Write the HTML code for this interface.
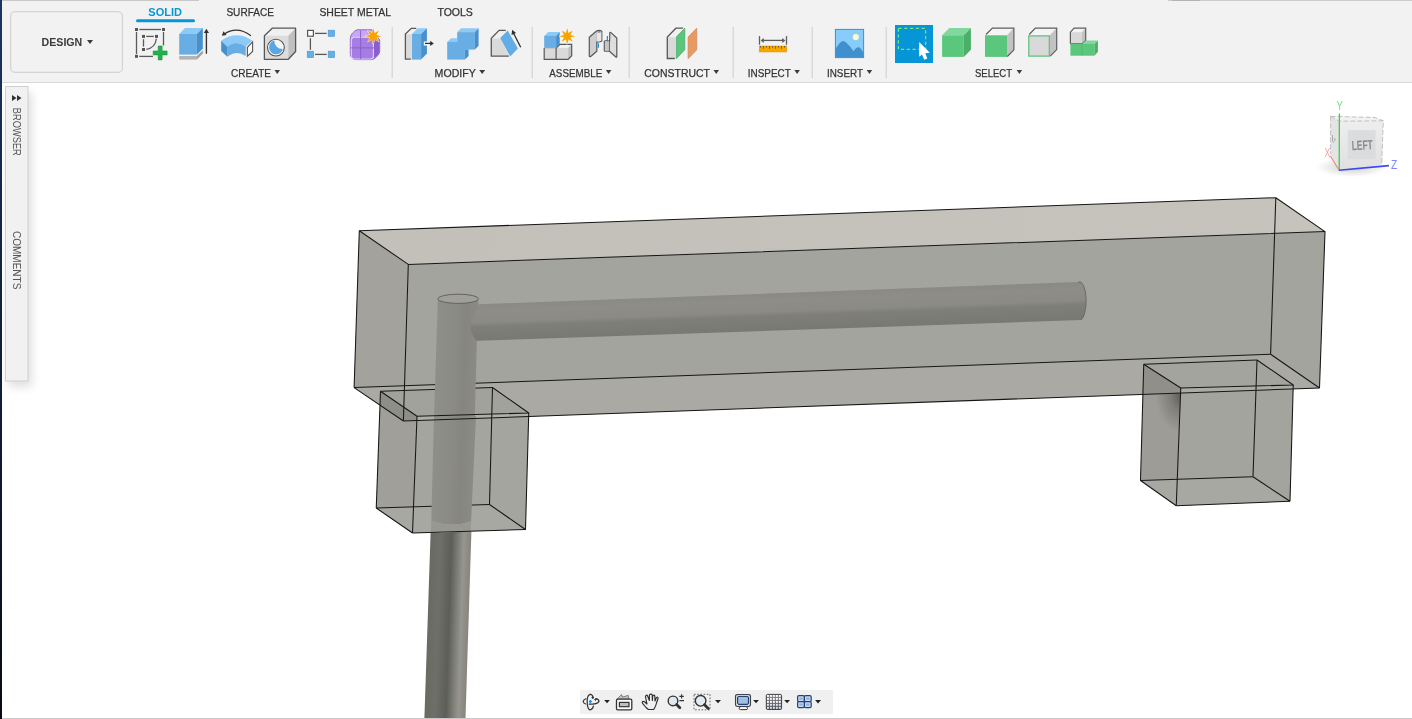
<!DOCTYPE html>
<html><head><meta charset="utf-8">
<style>
html,body{margin:0;padding:0;width:1412px;height:719px;overflow:hidden;background:#fff;font-family:"Liberation Sans",sans-serif;}
svg{position:absolute;left:0;top:0;will-change:transform;}
</style></head>
<body>
<svg width="1412" height="719" viewBox="0 0 1412 719" font-family="Liberation Sans, sans-serif">
<defs>
  <linearGradient id="strip" x1="0" y1="0" x2="0" y2="1">
    <stop offset="0" stop-color="#1c3362"/><stop offset="0.6" stop-color="#0f1b36"/><stop offset="1" stop-color="#070a12"/>
  </linearGradient>
  <filter id="panelShadow" x="-100%" y="-20%" width="300%" height="140%">
    <feGaussianBlur stdDeviation="5"/>
  </filter>
</defs>
<!-- toolbar -->
<rect x="0" y="0" width="1412" height="82" fill="#f2f2f2"/>
<rect x="0" y="82" width="1412" height="1" fill="#d9d9d9"/>
<rect x="2" y="0" width="197" height="1" fill="#c8c8c8"/>
<rect x="1168" y="0" width="244" height="1" fill="#cccccc"/>
<rect x="1172" y="0" width="28" height="1" fill="#b4b4b4"/>

<!-- design button -->
<rect x="10.6" y="11.6" width="111.8" height="60.8" rx="4.5" fill="#f2f2f2" stroke="#d4d4d4" stroke-width="1.3"/>
<text x="41.6" y="46" font-size="11" font-weight="bold" fill="#3a3a3a" textLength="40.7" lengthAdjust="spacingAndGlyphs">DESIGN</text>
<path d="M87 40 L93 40 L90 44 Z" fill="#3a3a3a"/>

<!-- tabs -->
<text x="148.3" y="16" font-size="11" font-weight="bold" fill="#0696d7" textLength="33.7" lengthAdjust="spacingAndGlyphs">SOLID</text>
<rect x="136" y="19.2" width="59" height="3" rx="1.5" fill="#0696d7"/>
<text x="226.4" y="16" font-size="11" fill="#333" stroke="#333" stroke-width="0.25" textLength="47.6" lengthAdjust="spacingAndGlyphs">SURFACE</text>
<text x="319.4" y="16" font-size="11" fill="#333" stroke="#333" stroke-width="0.25" textLength="71.6" lengthAdjust="spacingAndGlyphs">SHEET METAL</text>
<text x="437.4" y="16" font-size="11" fill="#333" stroke="#333" stroke-width="0.25" textLength="35.5" lengthAdjust="spacingAndGlyphs">TOOLS</text>

<!-- group labels -->
<g font-size="11" fill="#333" stroke="#333" stroke-width="0.25">
<text x="231" y="77" textLength="40" lengthAdjust="spacingAndGlyphs">CREATE</text>
<text x="434.6" y="77" textLength="41.2" lengthAdjust="spacingAndGlyphs">MODIFY</text>
<text x="549.3" y="77" textLength="52.9" lengthAdjust="spacingAndGlyphs">ASSEMBLE</text>
<text x="644.3" y="77" textLength="65.7" lengthAdjust="spacingAndGlyphs">CONSTRUCT</text>
<text x="747.8" y="77" textLength="43" lengthAdjust="spacingAndGlyphs">INSPECT</text>
<text x="827" y="77" textLength="36" lengthAdjust="spacingAndGlyphs">INSERT</text>
<text x="975" y="77" textLength="37" lengthAdjust="spacingAndGlyphs">SELECT</text>
</g>
<g fill="#3c3c3c">
<path d="M274.5 70 h5.5 l-2.75 4 z"/>
<path d="M479.2 70 h6 l-3 4 z"/>
<path d="M605.9 70 h5.5 l-2.75 4 z"/>
<path d="M713.5 70 h5.5 l-2.75 4 z"/>
<path d="M794.4 70 h5.5 l-2.75 4 z"/>
<path d="M866.7 70 h5.5 l-2.75 4 z"/>
<path d="M1016.6 70 h5.5 l-2.75 4 z"/>
</g>
<!-- separators -->
<g fill="#d9d9d9">
<rect x="391.5" y="27" width="1.5" height="51"/>
<rect x="531.5" y="27" width="1.5" height="51"/>
<rect x="628.5" y="27" width="1.5" height="51"/>
<rect x="732.5" y="27" width="1.5" height="51"/>
<rect x="811.5" y="27" width="1.5" height="51"/>
<rect x="885.5" y="27" width="1.5" height="51"/>
</g>


<g id="icons">
<!-- Sketch -->
<g>
 <g stroke="#5a5a5a" stroke-width="1.3" fill="none">
  <line x1="139.3" y1="29.5" x2="161" y2="29.5"/>
  <line x1="136.5" y1="32" x2="136.5" y2="54"/>
  <line x1="163.5" y1="32" x2="163.5" y2="45.5"/>
  <line x1="139.3" y1="56.4" x2="153" y2="56.4"/>
  <line x1="146.2" y1="36.4" x2="153.8" y2="36.4"/>
  <line x1="143.5" y1="39.2" x2="143.5" y2="46.6"/>
  <path d="M156.3,38.8 Q155.5,47.8 146.3,49.4"/>
 </g>
 <g fill="#555">
  <rect x="135" y="28" width="3" height="3"/><rect x="162" y="28" width="3" height="3"/><rect x="135" y="54.8" width="3" height="3"/>
  <rect x="142" y="34.9" width="3" height="3"/><rect x="155" y="34.9" width="3" height="3"/><rect x="142" y="48" width="3" height="3"/>
 </g>
 <path d="M158.2,46 h3.9 v5 h5 v3.9 h-5 v5 h-3.9 v-5 h-5 v-3.9 h5 z" fill="#22b04c" stroke="#17953b" stroke-width="0.6"/>
</g>
<!-- Extrude -->
<g>
 <polygon points="179.2,56 196.9,56 196.9,59.6 179.2,59.6" fill="#b3b3b3"/>
 <polygon points="196.9,56 202.8,50.3 202.8,53.6 196.9,59.6" fill="#a0a0a0"/>
 <polygon points="179.2,34 185,28 202.8,28 196.9,34" fill="#8ccaf8"/>
 <polygon points="179.2,34 196.9,34 196.9,54.6 179.2,54.6" fill="#68ade4"/>
 <polygon points="196.9,34 202.8,28 202.8,48.6 196.9,54.6" fill="#4690cd"/>
 <line x1="206.4" y1="32" x2="206.4" y2="53.7" stroke="#333" stroke-width="1.4"/>
 <polygon points="206.4,28.8 209,33 203.8,33" fill="#333"/>
</g>
<!-- Revolve -->
<g>
 <path d="M250.9,35.7 Q237,25.5 224,34.2" stroke="#333" stroke-width="1.2" fill="none"/>
 <polygon points="221.8,35.8 223.5,31.2 226.6,35" fill="#333"/>
 <path d="M221.2,40.7 Q236.4,30 252.3,40.7 L245.9,46.5 Q236.4,39.5 227,46.5 Z" fill="#8ccaf8"/>
 <path d="M227,46.5 Q236.4,39.5 245.9,46.5 L245.6,55.9 Q236.4,49.5 227.3,56.8 Z" fill="#68ade4"/>
 <polygon points="221.2,40.7 227,46.5 227.3,56.8 221.2,51" fill="#4690cd"/>
 <polygon points="247.4,47.3 252.6,41.8 252.6,51.5 247.4,56.2" fill="#fff" stroke="#555" stroke-width="1.1"/>
</g>
<!-- Hole -->
<g>
 <polygon points="264.4,35.7 272.2,28.2 295.6,28.2 288.3,35.7" fill="#f0f0f0"/>
 <polygon points="264.4,35.7 288.3,35.7 288.3,59.3 264.4,59.3" fill="#dcdcdc"/>
 <polygon points="288.3,35.7 295.6,28.2 295.6,51.5 288.3,59.3" fill="#c0c0c0"/>
 <path d="M264.4,59.3 V35.7 L272.2,28.2 H295.6 V51.5 L288.3,59.3 Z" fill="none" stroke="#575757" stroke-width="1.3" stroke-linejoin="round"/>
 <circle cx="275.9" cy="47.6" r="8.4" fill="#f4f4f4" stroke="#555" stroke-width="1.1"/>
 <path d="M274.3,40.6 A7,7 0 1 0 282.9,48.9 A8,8 0 0 1 274.3,40.6 Z" fill="#5aa6e2"/>
</g>
<!-- Pattern -->
<g>
 <g stroke="#5a5a5a" stroke-width="1.3">
  <line x1="315" y1="33.4" x2="326.7" y2="33.4"/>
  <line x1="310.4" y1="38.2" x2="310.4" y2="49.8"/>
  <line x1="315" y1="54.4" x2="326.7" y2="54.4"/>
 </g>
 <rect x="307.6" y="30.4" width="5.8" height="5.8" fill="#fff" stroke="#555" stroke-width="1.2"/>
 <rect x="328.2" y="30.2" width="6.4" height="6.2" fill="#63afe7" stroke="#4a93cf" stroke-width="0.6"/>
 <rect x="307.2" y="51.2" width="6.4" height="6.4" fill="#63afe7" stroke="#4a93cf" stroke-width="0.6"/>
 <rect x="328.2" y="51.2" width="6.4" height="6.4" fill="#63afe7" stroke="#4a93cf" stroke-width="0.6"/>
</g>
<!-- Form -->
<g>
 <path d="M357.5,29.8 H372 L379.7,40 V51 Q379.7,53.5 377.8,55.5 L375.2,58 Q373.6,59.6 370.5,59.6 H356.5 Q350.3,59.6 350.3,53.5 V38.5 Q350.3,35.2 352.6,33 L354.6,31.2 Q356,29.8 357.5,29.8 Z" fill="#c9a7f7" stroke="#9466d4" stroke-width="1"/>
 <path d="M373.6,37.5 L379.2,40.5 V51 Q379.2,53.3 377.5,55.2 L374.2,58.4 Z" fill="#8b5dce"/>
 <rect x="351.4" y="37.2" width="22" height="21.8" rx="3.2" fill="#a67de2" stroke="#e0cffb" stroke-width="1.1"/>
 <line x1="360.6" y1="30.5" x2="360.6" y2="59" stroke="#8760c6" stroke-width="0.9"/>
 <line x1="350.8" y1="47.9" x2="379" y2="47.9" stroke="#8760c6" stroke-width="0.9"/>
 <polygon points="373.3,28 374.6,33 378.9,30.6 376.5,34.9 381.5,36.2 376.5,37.5 378.9,41.8 374.6,39.4 373.3,44.4 372,39.4 367.7,41.8 370.1,37.5 365.1,36.2 370.1,34.9 367.7,30.6 372,33" fill="#f5a400" stroke="#fff" stroke-width="0.7" paint-order="stroke"/>
</g>
<!-- Press pull -->
<g>
 <polygon points="405.8,34.3 411.4,28.8 416,28.8 411.5,34.3 411.5,59 405.8,59" fill="#f0f0f0"/>
 <rect x="406" y="34.3" width="5.5" height="24.8" fill="#dadada"/>
 <path d="M410.8,59.2 H405.4 V34.1 L411.3,28.3 H416.3" fill="none" stroke="#575757" stroke-width="1.3"/>
 <polygon points="411.9,34 417.8,28.2 426.9,28.2 421.1,34" fill="#8ccaf8"/>
 <rect x="411.9" y="34" width="9.2" height="25.6" fill="#68ade4"/>
 <polygon points="421.1,34 426.9,28.2 426.9,53.4 421.1,59.6" fill="#4690cd"/>
 <rect x="423.8" y="41.5" width="5" height="4" fill="#fff"/>
 <line x1="425" y1="43.4" x2="431" y2="43.4" stroke="#2e2e2e" stroke-width="1.3"/>
 <polygon points="433.8,43.4 430.2,40.8 430.2,46" fill="#2e2e2e"/>
</g>
<!-- Combine -->
<g>
 <polygon points="457.2,32.1 461.1,28.2 478.6,28.2 474.9,32.1" fill="#8ccaf8"/>
 <rect x="457.2" y="32.1" width="17.7" height="17.5" fill="#68ade4"/>
 <polygon points="474.9,32.1 478.6,28.2 478.6,45.7 474.9,49.6" fill="#4690cd"/>
 <polygon points="447.2,42 451.1,38.2 457.2,38.2 457.2,42" fill="#8ccaf8"/>
 <rect x="447.2" y="42" width="17.7" height="17.6" fill="#68ade4"/>
 <polygon points="464.9,49.6 468.6,49.6 468.6,55.9 464.9,59.6" fill="#4690cd"/>
</g>
<!-- Draft -->
<g>
 <polygon points="491.8,38.4 499.2,31 505.8,31 500.4,38.4" fill="#f0f0f0"/>
 <polygon points="491.8,38.4 500.4,38.4 509,56 491.8,56" fill="#dadada"/>
 <path d="M508.8,56.2 H491.3 V38.2 L499.1,30.4 H505.7" fill="none" stroke="#575757" stroke-width="1.3"/>
 <polygon points="500.2,37.9 507.7,30.4 517.9,48.4 510.2,56.5" fill="#62ade6"/>
 <line x1="520.7" y1="47.3" x2="513.4" y2="33" stroke="#2e2e2e" stroke-width="1.3"/>
 <polygon points="512.2,29.8 511.5,35 516,33" fill="#2e2e2e"/>
</g>
<!-- New component -->
<g>
 <rect x="544.2" y="47.9" width="11.9" height="11.4" fill="#dadada"/>
 <polygon points="556.4,47.9 560,44.3 571.7,44.3 568.1,47.9" fill="#f2f2f2"/>
 <rect x="556.4" y="47.9" width="11.7" height="11.4" fill="#dadada"/>
 <polygon points="568.1,47.9 571.7,44.3 571.7,55.7 568.1,59.3" fill="#c2c2c2"/>
 <path d="M544.2,47.9 V59.3 H568.1 L571.7,55.7 V44.3 H560 L556.4,47.9 M556.1,47.9 V59.3" fill="none" stroke="#575757" stroke-width="1.2"/>
 <line x1="544.2" y1="47.9" x2="556.4" y2="47.9" stroke="#888" stroke-width="0.6"/>
 <polygon points="544.2,35.9 548.1,32.1 559.7,32.1 556.1,35.9" fill="#8ccaf8"/>
 <rect x="544.2" y="35.9" width="11.9" height="12" fill="#68ade4"/>
 <polygon points="556.1,35.9 559.7,32.1 559.7,44 556.1,47.9" fill="#4690cd"/>
 <polygon points="567.2,28 568.5,33 572.8,30.6 570.4,34.9 575.4,36.2 570.4,37.5 572.8,41.8 568.5,39.4 567.2,44.4 565.9,39.4 561.6,41.8 564,37.5 559,36.2 564,34.9 561.6,30.6 565.9,33" fill="#f5a400" stroke="#fff" stroke-width="0.6" paint-order="stroke"/>
</g>
<!-- Joint -->
<g stroke="#585858" stroke-width="1.2" stroke-linejoin="round">
 <path d="M589.3,56 V37.3 L596.2,31.3 Q599,29.6 601.8,31.3 V41 Q599.3,42.6 596.8,41.6 V51.2 L590.7,56.5 Q589.3,57 589.3,56 Z" fill="#cfcfcf"/>
 <path d="M596.6,31.8 Q599,30.6 601.3,31.8 V40.6 Q599.2,41.8 596.9,41.2 Z" fill="#e8e8e8" stroke="none"/>
 <line x1="596.5" y1="32" x2="596.6" y2="41.5" stroke="#b5b5b5" stroke-width="0.6"/>
 <ellipse cx="599" cy="31.9" rx="2" ry="0.8" fill="#8a8a8a" stroke="none"/>
 <path d="M609.8,32.8 Q610.2,31.9 611,32.6 L616.8,38 V56.5 Q616.8,57.6 615.9,57 L609.4,51.2 H605 Q604.3,51.2 604.3,50.5 V41.3 Q606.8,39.7 609.6,41.3 Z" fill="#dedede"/>
 <path d="M604.9,41.6 Q606.8,40.6 609,41.6 V50.7 H604.9 Z" fill="#c6c6c6" stroke="none"/>
 <line x1="609.5" y1="41.3" x2="609.4" y2="51" stroke="#585858" stroke-width="0.9"/>
</g>
<line x1="598.4" y1="43.2" x2="598.4" y2="47.8" stroke="#1e90e0" stroke-width="1.2"/>
<line x1="607.4" y1="35.9" x2="607.4" y2="41.5" stroke="#1e90e0" stroke-width="1.2"/>
<!-- Construct -->
<g>
 <polygon points="667.8,37.3 675.9,28.7 683,28.7 675.5,37.3" fill="#f0f0f0"/>
 <rect x="668" y="37.3" width="7" height="21" fill="#dadada"/>
 <path d="M674.8,58.5 H667.3 V37.1 L675.9,28.2 H683.1" fill="none" stroke="#575757" stroke-width="1.3"/>
 <polygon points="676.2,37.1 684.8,28.2 684.8,49.8 676.2,58.7" fill="#5cc57d" stroke="#43ab63" stroke-width="0.7"/>
 <polygon points="688.1,37.1 696.7,28.2 696.7,49.8 688.1,58.7" fill="#e69b64" stroke="#d3844f" stroke-width="0.7"/>
</g>
<!-- Inspect -->
<g>
 <g stroke="#5e5e5e" stroke-width="1.3">
  <line x1="759.5" y1="36.1" x2="759.5" y2="44.7"/>
  <line x1="786.5" y1="36.1" x2="786.5" y2="44.7"/>
  <line x1="762" y1="40.4" x2="784" y2="40.4"/>
 </g>
 <polygon points="760.6,40.4 763.8,37.9 763.8,42.9" fill="#5e5e5e"/>
 <polygon points="785.4,40.4 782.2,37.9 782.2,42.9" fill="#5e5e5e"/>
 <rect x="759.2" y="46" width="27.6" height="6" fill="#f7a800" stroke="#e29300" stroke-width="0.5"/>
 <g stroke="#5e5e5e" stroke-width="1">
  <line x1="760.5" y1="46" x2="760.5" y2="47.6"/><line x1="763.4" y1="46" x2="763.4" y2="48.8"/>
  <line x1="766.4" y1="46" x2="766.4" y2="47.6"/><line x1="769.5" y1="46" x2="769.5" y2="48.8"/>
  <line x1="772.4" y1="46" x2="772.4" y2="47.6"/><line x1="775.4" y1="46" x2="775.4" y2="48.8"/>
  <line x1="778.4" y1="46" x2="778.4" y2="47.6"/><line x1="781.5" y1="46" x2="781.5" y2="48.8"/>
  <line x1="784.5" y1="46" x2="784.5" y2="47.6"/>
 </g>
</g>
<!-- Insert -->
<g>
 <rect x="835.4" y="29.4" width="28.2" height="28.2" fill="#88ccfb" stroke="#3b90d1" stroke-width="1"/>
 <path d="M835.9,48.5 Q840,41 843.3,40.9 Q846.5,41 853.6,51.2 Q856,47.3 858.3,47.3 Q860.5,47.3 863.1,52 V57.1 H835.9 Z" fill="#3f90cd"/>
 <circle cx="855.8" cy="37.1" r="3.1" fill="#fdfbc2"/>
</g>
<!-- Select -->
<g>
 <rect x="895" y="25" width="38" height="38" fill="#0696d7"/>
 <rect x="898.4" y="28.4" width="27.2" height="20.9" fill="none" stroke="#7be27c" stroke-width="1.3" stroke-dasharray="3.2,2.6"/>
 <polygon points="919.2,42 919.2,56.7 921.9,54.4 924.3,59.8 927.3,58.6 925.3,53.3 929.8,52.8" fill="#fff"/>
</g>
<!-- Select cubes -->
<g>
 <polygon points="942.1,35.3 949.3,28.1 970.9,28.1 963.8,35.3" fill="#80d89c"/>
 <rect x="942.1" y="35.3" width="21.7" height="21.6" fill="#5bc77d"/>
 <polygon points="963.8,35.3 970.9,28.1 970.9,49.8 963.8,56.9" fill="#48b068"/>
</g>
<g>
 <polygon points="985,35.3 992.4,28.1 1013.9,28.1 1007,35.3" fill="#f4f4f4"/>
 <polygon points="1007,35.3 1013.9,28.1 1013.9,49.8 1007,56.9" fill="#c2c2c2"/>
 <path d="M986,34.5 L992.4,28.1 H1013.9 V49.8 L1007.3,56.5" fill="none" stroke="#5e5e5e" stroke-width="1.2"/>
 <rect x="985" y="35.3" width="22" height="21.6" fill="#5bc77d"/>
</g>
<g>
 <polygon points="1028.2,35.3 1035.3,28.1 1056.7,28.1 1049.8,35.3" fill="#f4f4f4"/>
 <polygon points="1049.8,35.3 1056.7,28.1 1056.7,49.6 1049.8,56.6" fill="#c2c2c2"/>
 <path d="M1029.2,34.5 L1035.3,28.1 H1056.7 V49.6 L1050.2,56.2" fill="none" stroke="#5e5e5e" stroke-width="1.2"/>
 <rect x="1028.8" y="35.9" width="20.5" height="20.2" fill="#d9d9d9" stroke="#5bbf7a" stroke-width="1.2"/>
</g>
<g>
 <polygon points="1070.4,32.2 1074.1,28.1 1085.7,28.1 1082,32.2" fill="#f4f4f4"/>
 <rect x="1070.4" y="32.2" width="11.6" height="11.3" fill="#d9d9d9"/>
 <polygon points="1082,32.2 1085.7,28.1 1085.7,40.4 1082,43.5" fill="#c2c2c2"/>
 <path d="M1070.4,43.5 V32.2 L1074.1,28.1 H1085.7 V40.4 L1082,43.9 H1070.4" fill="none" stroke="#5e5e5e" stroke-width="1.2"/>
 <rect x="1070.4" y="44" width="11.6" height="11.7" fill="#5bc77d"/>
 <polygon points="1082,44 1085.7,40.4 1097.9,40.4 1094.5,44" fill="#80d89c"/>
 <rect x="1082" y="44" width="12.5" height="11.7" fill="#5bc77d"/>
 <line x1="1082" y1="44" x2="1082" y2="55.7" stroke="#4fb570" stroke-width="0.7"/>
 <polygon points="1094.5,44 1097.9,40.4 1097.9,51.8 1094.5,55.7" fill="#48b068"/>
</g>
</g>

<!-- END ICONS -->
<!-- 3D MODEL -->
<g id="model">
<defs>
 <linearGradient id="vpipeOut" gradientUnits="userSpaceOnUse" x1="447.9" y1="0" x2="488.7" y2="0" gradientTransform="skewX(-1.86)">
  <stop offset="0" stop-color="#6a6a62"/><stop offset="0.25" stop-color="#6e6f68"/><stop offset="0.52" stop-color="#5e5e59"/>
  <stop offset="0.7" stop-color="#80807a"/><stop offset="0.82" stop-color="#96968f"/><stop offset="1" stop-color="#87847b"/>
 </linearGradient>
 <linearGradient id="hpipe" gradientUnits="userSpaceOnUse" x1="0" y1="321.5" x2="0" y2="358.3" gradientTransform="skewY(-2.1)">
  <stop offset="0" stop-color="#8a8983"/><stop offset="0.2" stop-color="#8e8d87"/><stop offset="0.5" stop-color="#8b8a84"/><stop offset="0.62" stop-color="#7f7f79"/><stop offset="1" stop-color="#797974"/>
 </linearGradient>
 <linearGradient id="vpipeIn" gradientUnits="userSpaceOnUse" x1="447.5" y1="0" x2="488.5" y2="0" gradientTransform="skewX(-1.86)">
  <stop offset="0" stop-color="#8f8f89"/><stop offset="0.45" stop-color="#8b8b85"/><stop offset="0.7" stop-color="#86867f"/><stop offset="1" stop-color="#8b8b85"/>
 </linearGradient>
 <linearGradient id="topface" gradientUnits="userSpaceOnUse" x1="400" y1="200" x2="1300" y2="260">
  <stop offset="0" stop-color="#c3c0b9"/><stop offset="1" stop-color="#c6c3bc"/>
 </linearGradient>
 <radialGradient id="shadowR" cx="0.5" cy="0.5" r="0.5">
  <stop offset="0" stop-color="#3a3a36" stop-opacity="0.6"/><stop offset="0.4" stop-color="#3a3a36" stop-opacity="0.3"/><stop offset="1" stop-color="#3a3a36" stop-opacity="0"/>
 </radialGradient>
</defs>
<polygon points="359.30,230.80 1275.80,197.70 1325.00,231.60 408.30,264.40" fill="url(#topface)"/>
<polygon points="359.30,230.80 408.30,264.40 403.40,421.00 354.10,387.60" fill="#a3a29d"/>
<polygon points="408.30,264.40 1325.00,231.60 1319.50,388.00 403.40,421.00" fill="#a3a49e"/>
<polygon points="354.10,387.60 1270.60,354.20 1319.50,388.00 403.40,421.00" fill="#aaa9a3"/>
<polygon points="380.50,391.25 417.00,416.25 412.50,533.00 376.25,508.00" fill="#a09f9a"/>
<polygon points="417.00,416.25 528.75,413.00 525.50,529.50 412.50,533.00" fill="#a4a59f"/>
<polygon points="376.25,508.00 489.50,504.50 525.50,529.50 412.50,533.00" fill="#a8a8a2"/>
<polygon points="380.50,391.25 492.50,387.50 528.75,413.00 417.00,416.25" fill="#a2a29c"/>
<polygon points="380.50,391.25 417.00,416.25 416.85,420.51 403.40,421.00 380.00,405.50" fill="#8e8e89"/>
<polygon points="417.00,416.25 528.75,413.00 528.75,416.48 417.00,420.51" fill="#afafa9"/>
<polygon points="1143.75,364.25 1180.75,388.00 1176.25,505.75 1140.50,480.50" fill="#9d9c97"/>
<polygon points="1180.75,388.00 1293.25,385.00 1290.00,501.25 1176.25,505.75" fill="#a3a49e"/>
<polygon points="1140.50,480.50 1253.00,476.75 1290.00,501.25 1176.25,505.75" fill="#a8a8a2"/>
<polygon points="1143.75,364.25 1257.00,360.00 1293.25,385.00 1180.75,388.00" fill="#a4a49e"/>
<polygon points="1143.75,364.25 1180.75,388.00 1180.55,393.00 1142.75,394.33" fill="#908f8a"/>
<polygon points="1180.75,388.00 1293.25,385.00 1293.25,388.95 1180.75,393.00" fill="#acaca6"/>
<clipPath id="rlf"><polygon points="1142.75,394.33 1180.75,393.00 1176.25,505.75 1140.50,480.50"/></clipPath>
<ellipse cx="1180" cy="396" rx="24" ry="36" fill="url(#shadowR)" clip-path="url(#rlf)"/>
<g stroke="#161616" stroke-width="1.05" fill="none" stroke-linejoin="round">
<line x1="359.3" y1="230.8" x2="1275.8" y2="197.7"/>
<line x1="359.3" y1="230.8" x2="354.1" y2="387.6"/>
<line x1="1275.8" y1="197.7" x2="1270.6" y2="354.2"/>
<line x1="354.1" y1="387.6" x2="1270.6" y2="354.2"/>
<line x1="380.5" y1="391.25" x2="492.5" y2="387.5"/>
<line x1="376.25" y1="508" x2="489.5" y2="504.5"/>
<line x1="492.5" y1="387.5" x2="489.5" y2="504.5"/>
<line x1="1143.75" y1="364.25" x2="1257" y2="360"/>
<line x1="1140.5" y1="480.5" x2="1253" y2="476.75"/>
<line x1="1257" y1="360" x2="1253" y2="476.75"/>
</g>
<path d="M437.8,299 L478.5,300 L476.9,341 L474.7,421 L433.9,421 Z" fill="url(#vpipeIn)"/>
<path d="M434,416 L476,416 L471.1,521.4 Q451.2,527.8 431.3,520.7 Z" fill="url(#vpipeIn)"/>
<path d="M431.3,520.7 Q451.2,527.8 471.1,521.4 L470.9,531 L430.8,532.3 Z" fill="#989892"/>
<path d="M479,304.2 L1078.5,282 A6.5,19.2 0 0 1 1080.7,320.1 L477,340.8 C474,338 471,333 470.5,328 C470,322 476,312 479,304.2 Z" fill="url(#hpipe)"/>
<path d="M1078.5,282 A6.5,19.2 0 0 1 1080.7,320.1" fill="none" stroke="#66665f" stroke-width="0.9"/>
<path d="M430.6,533 L471.4,531.5 L465.5,718 L424.4,718 Z" fill="url(#vpipeOut)"/>
<ellipse cx="458.2" cy="298.8" rx="20.4" ry="4.6" fill="#a09f98" stroke="#5e5e58" stroke-width="0.9"/>
<g stroke="#161616" stroke-width="1.05" fill="none" stroke-linejoin="round">
<polyline points="359.30,230.80 408.30,264.40 1325.00,231.60 1275.80,197.70"/>
<line x1="408.3" y1="264.4" x2="403.4" y2="421"/>
<line x1="1325" y1="231.6" x2="1319.5" y2="388"/>
<line x1="403.4" y1="421" x2="1319.5" y2="388"/>
<line x1="354.1" y1="387.6" x2="403.4" y2="421"/>
<line x1="1270.6" y1="354.2" x2="1319.5" y2="388"/>
<polyline points="380.50,391.25 417.00,416.25 528.75,413.00 492.50,387.50"/>
<line x1="417" y1="416.25" x2="412.5" y2="533"/>
<line x1="528.75" y1="413" x2="525.5" y2="529.5"/>
<line x1="380.5" y1="391.25" x2="376.25" y2="508"/>
<line x1="412.5" y1="533" x2="525.5" y2="529.5"/>
<line x1="376.25" y1="508" x2="412.5" y2="533"/>
<line x1="489.5" y1="504.5" x2="525.5" y2="529.5"/>
<polyline points="1143.75,364.25 1180.75,388.00 1293.25,385.00 1257.00,360.00"/>
<line x1="1180.75" y1="388" x2="1176.25" y2="505.75"/>
<line x1="1293.25" y1="385" x2="1290" y2="501.25"/>
<line x1="1143.75" y1="364.25" x2="1140.5" y2="480.5"/>
<line x1="1176.25" y1="505.75" x2="1290" y2="501.25"/>
<line x1="1140.5" y1="480.5" x2="1176.25" y2="505.75"/>
<line x1="1253" y1="476.75" x2="1290" y2="501.25"/>
</g>
</g>
<g id="nav">
<rect x="580" y="690" width="253" height="24" fill="#f0f0f0"/>
<!-- orbit -->
<g stroke="#333" stroke-width="1.2" fill="none" stroke-linecap="round">
 <path d="M590.2,694.4 Q587,695 587.2,702 Q587.4,709.8 590.2,709.9 Q592.5,709.8 593.4,706.2"/>
 <path d="M590.2,694.4 Q592.5,694.6 592.9,697"/>
 <path d="M585.9,698.8 Q583.2,700 583.2,701.5 Q583.3,703.2 585.7,704"/>
 <path d="M589.2,704.2 Q597.5,704.2 598.9,701.6 Q599.2,699.6 596.5,698.6"/>
</g>
<g fill="#333">
 <rect x="591.9" y="696.8" width="1.6" height="1.6"/><rect x="592.2" y="697" width="1" height="1"/>
 <path d="M591.6,697.6 h2.4 M592.8,696.4 v2.4" stroke="#333" stroke-width="1"/>
 <path d="M594.3,699.5 h2.4 M595.5,698.3 v2.4" stroke="#333" stroke-width="1"/>
</g>
<path d="M589,701.5 h2.8 M590.4,700.1 v2.8" stroke="#1a8ce6" stroke-width="1.3"/>
<path d="M604.2,700.1 h5.7 l-2.85,3.2 z" fill="#222"/>
<!-- look at -->
<path d="M616.8,699.4 L621.6,694.5 L622.3,697.1 L628.2,695.4 L628.9,699 Z" fill="#c2c6cf" stroke="#555" stroke-width="0.7"/>
<rect x="616.5" y="699.2" width="15.3" height="10.6" rx="1.2" fill="#fff" stroke="#333" stroke-width="1.3"/>
<rect x="619.4" y="702.4" width="9.6" height="4.3" fill="#b9bfcc" stroke="#333" stroke-width="1.2"/>
<!-- hand -->
<path d="M648.4,709.5 L653.7,709.5 Q656,706 656.5,703 L658,698.5 Q658.2,697 657,697.2 Q656.3,697.4 656,698.5 L655,701 L654.8,696 Q654.5,695 653.6,695.2 Q652.8,695.4 652.7,696.3 L652.4,700.5 L652.2,695 Q652,694 650.8,694.1 Q649.5,694.2 649.4,695.2 L649.4,700.5 L647.6,696 Q647.2,695 646.4,695.2 Q645.4,695.5 645.5,696.5 L646.6,702.5 L647,704 L644.5,701.8 Q643.2,701 642.4,701.7 Q641.9,702.4 642.6,703.3 L646,707.5 Z" fill="#eef0f4" stroke="#2e2e2e" stroke-width="1.15" stroke-linejoin="round"/>
<!-- zoom -->
<circle cx="673" cy="700.9" r="4.8" fill="#dfeaee" stroke="#333" stroke-width="1.4"/>
<line x1="676.6" y1="704.6" x2="679.8" y2="707.8" stroke="#333" stroke-width="2.8" stroke-linecap="round"/>
<path d="M679.4,696.4 h4.4 M681.6,694.2 v4.4 M679.4,700.6 h4.6" stroke="#333" stroke-width="1.1"/>
<!-- fit -->
<rect x="694" y="694.3" width="16" height="15.5" fill="none" stroke="#555" stroke-width="0.9" stroke-dasharray="1.6,1.6"/>
<circle cx="700.6" cy="700.8" r="5.3" fill="#e0ecee" stroke="#333" stroke-width="1.4"/>
<line x1="704.5" y1="704.8" x2="708.3" y2="708.5" stroke="#333" stroke-width="2.8" stroke-linecap="round"/>
<path d="M715,700 h6 l-3,3.3 z" fill="#222"/>
<!-- display -->
<rect x="735.6" y="694.6" width="14.8" height="11.7" rx="1.5" fill="#fff" stroke="#444" stroke-width="1.3"/>
<rect x="737.6" y="696.5" width="10.9" height="7.8" rx="1.2" fill="#a2bfe2" stroke="#22407a" stroke-width="1.2"/>
<path d="M740,706.6 h6.6 l1,2.1 Q747.5,709.6 746,709.6 h-5.4 Q739.2,709.6 739.2,708.6 Z" fill="#fff" stroke="#333" stroke-width="1"/>
<path d="M753.2,700.1 h5.7 l-2.85,3.2 z" fill="#222"/>
<!-- grid -->
<defs><linearGradient id="gridg" x1="0" y1="0" x2="0" y2="1"><stop offset="0" stop-color="#8c8c90"/><stop offset="1" stop-color="#4e5262"/></linearGradient></defs>
<rect x="766.3" y="694.4" width="15.3" height="15.1" rx="1.3" fill="url(#gridg)" stroke="#444" stroke-width="1"/>
<g fill="#fff">
<rect x="767.00" y="695.00" width="1.9" height="1.9" opacity="1.0"/>
<rect x="769.97" y="695.00" width="1.9" height="1.9" opacity="1.0"/>
<rect x="772.94" y="695.00" width="1.9" height="1.9" opacity="1.0"/>
<rect x="775.91" y="695.00" width="1.9" height="1.9" opacity="1.0"/>
<rect x="778.88" y="695.00" width="1.9" height="1.9" opacity="1.0"/>
<rect x="767.00" y="697.97" width="1.9" height="1.9" opacity="1.0"/>
<rect x="769.97" y="697.97" width="1.9" height="1.9" opacity="1.0"/>
<rect x="772.94" y="697.97" width="1.9" height="1.9" opacity="1.0"/>
<rect x="775.91" y="697.97" width="1.9" height="1.9" opacity="1.0"/>
<rect x="778.88" y="697.97" width="1.9" height="1.9" opacity="1.0"/>
<rect x="767.00" y="700.94" width="1.9" height="1.9" opacity="1.0"/>
<rect x="769.97" y="700.94" width="1.9" height="1.9" opacity="1.0"/>
<rect x="772.94" y="700.94" width="1.9" height="1.9" opacity="1.0"/>
<rect x="775.91" y="700.94" width="1.9" height="1.9" opacity="1.0"/>
<rect x="778.88" y="700.94" width="1.9" height="1.9" opacity="1.0"/>
<rect x="767.00" y="703.91" width="1.9" height="1.9" opacity="0.85"/>
<rect x="769.97" y="703.91" width="1.9" height="1.9" opacity="0.85"/>
<rect x="772.94" y="703.91" width="1.9" height="1.9" opacity="0.85"/>
<rect x="775.91" y="703.91" width="1.9" height="1.9" opacity="0.85"/>
<rect x="778.88" y="703.91" width="1.9" height="1.9" opacity="0.85"/>
<rect x="767.00" y="706.88" width="1.9" height="1.9" opacity="0.85"/>
<rect x="769.97" y="706.88" width="1.9" height="1.9" opacity="0.85"/>
<rect x="772.94" y="706.88" width="1.9" height="1.9" opacity="0.85"/>
<rect x="775.91" y="706.88" width="1.9" height="1.9" opacity="0.85"/>
<rect x="778.88" y="706.88" width="1.9" height="1.9" opacity="0.85"/>
</g>
<path d="M784.2,700.1 h5.8 l-2.9,3.2 z" fill="#222"/>
<!-- viewports -->
<g fill="#cadcf2" stroke="#22407a" stroke-width="1.2">
 <rect x="797.6" y="695.6" width="6.8" height="6" rx="1.3"/><rect x="804.4" y="695.6" width="6.8" height="6" rx="1.3"/>
 <rect x="797.6" y="701.6" width="6.8" height="6" rx="1.3"/><rect x="804.4" y="701.6" width="6.8" height="6" rx="1.3"/>
</g>
<g fill="#8fb0d8">
 <rect x="799.3" y="697.5" width="3.4" height="2.2"/><rect x="806.1" y="697.5" width="3.4" height="2.2"/>
 <rect x="799.3" y="703.5" width="3.4" height="2.2"/><rect x="806.1" y="703.5" width="3.4" height="2.2"/>
</g>
<path d="M815.1,700.1 h5.9 l-2.95,3.4 z" fill="#222"/>
</g>
<!-- viewcube -->
<g id="viewcube">
 <defs>
  <radialGradient id="vcShadow" cx="0.5" cy="0.5" r="0.5"><stop offset="0" stop-color="#000" stop-opacity="0.22"/><stop offset="0.5" stop-color="#000" stop-opacity="0.1"/><stop offset="1" stop-color="#000" stop-opacity="0"/></radialGradient>
  <linearGradient id="vcFront" x1="0" y1="0" x2="0" y2="1"><stop offset="0" stop-color="#eeeeee"/><stop offset="1" stop-color="#e0e0e0"/></linearGradient>
 </defs>
 <ellipse cx="1352" cy="167" rx="36" ry="10" fill="url(#vcShadow)"/>
 <polygon points="1330.6,116.3 1339.4,121 1339,170 1330.6,156" fill="#e4e4e4"/>
 <polygon points="1330.6,116.3 1375,117.5 1383.3,120.8 1339.4,121" fill="#f2f2f2"/>
 <polygon points="1339.4,121 1383.3,120.8 1381.7,164.7 1339,170" fill="url(#vcFront)"/>
 <path d="M1330.6,116.3 L1339.4,121.2 L1383.3,120.8 L1381.7,164.7 M1330.6,116.3 L1330.6,154 M1330.6,116.3 L1375,117.5 L1383.3,120.8" fill="none" stroke="#b3b3b3" stroke-width="0.8" stroke-dasharray="5,2"/>
 <rect x="1347.8" y="130.2" width="27.8" height="28.9" fill="#dbdcde"/>
 <text x="1351.7" y="149.7" font-size="13.5" font-weight="bold" fill="#85888d" textLength="21.1" lengthAdjust="spacingAndGlyphs" transform="rotate(-3 1362 145)">LEFT</text>
 <path d="M1332.5,135 v6 l1.5,2 M1334.8,138 v3" stroke="#9a9a9a" stroke-width="0.8" fill="none"/>
 <line x1="1339.4" y1="113.5" x2="1339.2" y2="170.5" stroke="#37d040" stroke-width="1.3"/>
 <line x1="1330.3" y1="156" x2="1339" y2="170" stroke="#f08080" stroke-width="1.1"/>
 <line x1="1339" y1="170.3" x2="1388.9" y2="165.6" stroke="#3a48f0" stroke-width="1.6"/>
 <text x="1336.5" y="110.2" font-size="12" fill="#6ee86e" textLength="6.3" lengthAdjust="spacingAndGlyphs">Y</text>
 <text x="1324.4" y="157.4" font-size="12" fill="#f4a0a0" textLength="5.8" lengthAdjust="spacingAndGlyphs">X</text>
 <text x="1391" y="169.1" font-size="12" fill="#7f88f7" textLength="6.3" lengthAdjust="spacingAndGlyphs">Z</text>
</g>
<!-- END NAV -->

<!-- left strip -->
<rect x="0" y="0" width="2" height="719" fill="url(#strip)"/>
<!-- bottom line -->
<rect x="2" y="718" width="1410" height="1" fill="#c9c9c9"/>

<!-- sidebar panel -->
<rect x="8" y="92" width="24" height="295" fill="#000" opacity="0.12" filter="url(#panelShadow)"/>
<rect x="5.5" y="86.5" width="22.5" height="294.5" fill="#f1f1f1" stroke="#d0d0d0" stroke-width="1"/>
<path d="M12 95 L16.5 98 L12 101 Z M17 95 L21.5 98 L17 101 Z" fill="#333"/>
<text transform="translate(12.6,107.8) rotate(90)" font-size="11" fill="#555" textLength="48" lengthAdjust="spacingAndGlyphs">BROWSER</text>
<text transform="translate(12.8,231) rotate(90)" font-size="11" fill="#555" textLength="58.4" lengthAdjust="spacingAndGlyphs">COMMENTS</text>

</svg>
</body></html>
